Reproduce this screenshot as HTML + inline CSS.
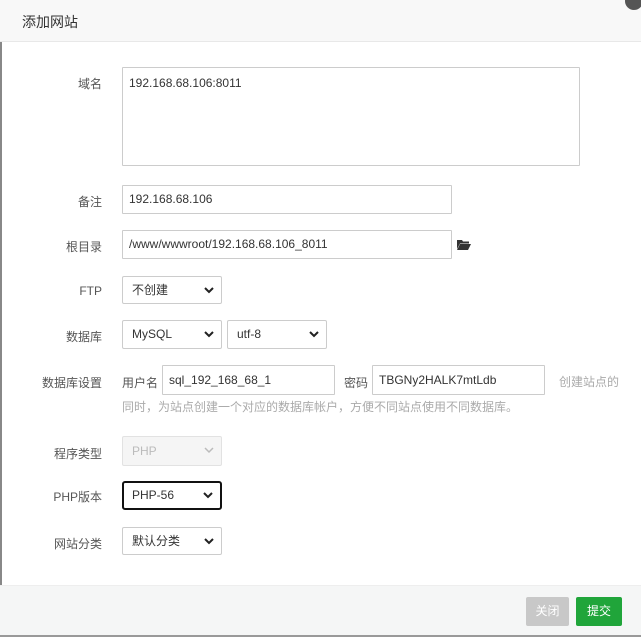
<!DOCTYPE html>
<html><head><meta charset="utf-8"><style>
*{box-sizing:border-box;margin:0;padding:0}
body{width:641px;height:637px;background:#fff;font-family:"Liberation Sans","Noto Sans CJK SC",sans-serif;font-size:12px;color:#555;position:relative;overflow:hidden}
.abs{position:absolute}
.hdr{left:0;top:0;width:641px;height:42px;background:#f8f8f8;border-bottom:1px solid #e8e8e8}
.lbl{width:102px;left:0;text-align:right;color:#555;font-size:12px}
.inp{border:1px solid #ccc;background:#fff;font-size:12px;color:#333;padding-left:6px;line-height:27px;border-radius:1px}
.sel{border:1px solid #ccc;border-radius:2px;background:#fff;font-size:12px;color:#333;padding-left:9px;line-height:26px}
.sel svg{position:absolute;right:7px;top:10px}
.ft{left:0;top:585px;width:641px;height:50px;background:#f5f6f6;border-top:1px solid #eee}
</style></head><body>
<div class="abs" style="left:0;top:0;width:2px;height:637px;background:#888"></div>
<div class="abs hdr"></div>
<div class="abs" style="left:22px;top:12px;font-size:14px;color:#333">添加网站</div>
<div class="abs" style="left:625px;top:-8px;width:18px;height:18px;border-radius:50%;background:#555"></div>

<div class="abs lbl" style="top:75px">域名</div>
<div class="abs inp" style="left:122px;top:67px;width:458px;height:99px;line-height:normal;padding:8px 6px">192.168.68.106:8011</div>

<div class="abs lbl" style="top:193px">备注</div>
<div class="abs inp" style="left:122px;top:185px;width:330px;height:29px">192.168.68.106</div>

<div class="abs lbl" style="top:238px">根目录</div>
<div class="abs inp" style="left:122px;top:230px;width:330px;height:29px">/www/wwwroot/192.168.68.106_8011</div>
<svg class="abs" style="left:457px;top:239px" width="14" height="11" viewBox="0 0 14 11"><path d="M0 1h5l1 1.5h6v2H3L0 10z M3 5h11l-3 6H0z" fill="#333"/></svg>

<div class="abs lbl" style="top:284px">FTP</div>
<div class="abs sel" style="left:122px;top:276px;width:100px;height:28px">不创建<svg width="10" height="7"><path d="M1 1l4 4 4-4" stroke="#222" stroke-width="2" fill="none"/></svg></div>

<div class="abs lbl" style="top:328px">数据库</div>
<div class="abs sel" style="left:122px;top:320px;width:100px;height:29px">MySQL<svg width="10" height="7"><path d="M1 1l4 4 4-4" stroke="#222" stroke-width="2" fill="none"/></svg></div>
<div class="abs sel" style="left:227px;top:320px;width:100px;height:29px">utf-8<svg width="10" height="7"><path d="M1 1l4 4 4-4" stroke="#222" stroke-width="2" fill="none"/></svg></div>

<div class="abs lbl" style="top:374px">数据库设置</div>
<div class="abs" style="left:122px;top:374px;color:#555">用户名</div>
<div class="abs inp" style="left:162px;top:365px;width:173px;height:30px;line-height:28px">sql_192_168_68_1</div>
<div class="abs" style="left:344px;top:374px;color:#555">密码</div>
<div class="abs inp" style="left:372px;top:365px;width:173px;height:30px;line-height:28px">TBGNy2HALK7mtLdb</div>
<div class="abs" style="left:559px;top:373px;color:#aaa">创建站点的</div>
<div class="abs" style="left:122px;top:398px;color:#aaa">同时，为站点创建一个对应的数据库帐户，方便不同站点使用不同数据库。</div>

<div class="abs lbl" style="top:445px">程序类型</div>
<div class="abs sel" style="left:122px;top:436px;width:100px;height:30px;background:#f5f5f5;border-color:#e2e2e2;color:#bbb;line-height:28px">PHP<svg width="10" height="7"><path d="M1 1l4 4 4-4" stroke="#bbb" stroke-width="1.5" fill="none"/></svg></div>

<div class="abs lbl" style="top:488px">PHP版本</div>
<div class="abs sel" style="left:122px;top:481px;width:100px;height:29px;border:2px solid #111;border-radius:3px;line-height:25px;padding-left:8px">PHP-56<svg width="10" height="7" style="top:9px"><path d="M1 1l4 4 4-4" stroke="#222" stroke-width="2" fill="none"/></svg></div>

<div class="abs lbl" style="top:535px">网站分类</div>
<div class="abs sel" style="left:122px;top:527px;width:100px;height:28px">默认分类<svg width="10" height="7"><path d="M1 1l4 4 4-4" stroke="#222" stroke-width="2" fill="none"/></svg></div>

<div class="abs ft"></div>
<div class="abs" style="left:526px;top:597px;width:43px;height:29px;background:#c8c8c8;border-radius:2px;color:#fff;text-align:center;line-height:29px">关闭</div>
<div class="abs" style="left:576px;top:597px;width:46px;height:29px;background:#20a53a;border-radius:2px;color:#fff;text-align:center;line-height:29px">提交</div>
<div class="abs" style="left:0;top:635px;width:641px;height:2px;background:#999"></div>
</body></html>
